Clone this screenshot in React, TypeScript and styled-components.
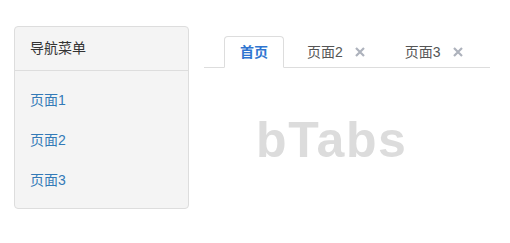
import React from "react";
import styled, { createGlobalStyle } from "styled-components";

const Global = createGlobalStyle`
  html, body { margin: 0; padding: 0; background: #fff; }
  body {
    font-family: "Liberation Sans", "Noto Sans CJK SC", sans-serif;
    font-size: 14px;
    line-height: 20px;
    color: #333;
  }
  * { box-sizing: border-box; }
`;

const Page = styled.div`
  display: flex;
  align-items: flex-start;
  gap: 15px;
  padding: 26px 0 0 14px;
`;

const Panel = styled.div`
  width: 175px;
  background: #f4f4f4;
  border: 1px solid #dddddd;
  border-radius: 4px;
`;

const PanelHeading = styled.div`
  padding: 11px 15px 12px;
  border-bottom: 1px solid #dddddd;
  color: #333;
`;

const NavList = styled.ul`
  list-style: none;
  margin: 0;
  padding: 9px 0 8px;
`;

const NavItem = styled.li`
  padding: 10px 15px;
  color: #337ab7;
  cursor: pointer;
`;

const Main = styled.div`
  width: 286px;
  padding-top: 10px;
`;

const TabBar = styled.ul`
  display: flex;
  list-style: none;
  margin: 0;
  padding: 0 0 0 20px;
  border-bottom: 1px solid #dddddd;
`;

const Tab = styled.li<{ $active?: boolean; $closable?: boolean }>`
  display: flex;
  align-items: center;
  margin: 0 2px -1px 0;
  padding: ${(p) => (p.$closable ? "5px 16px 5px 20px" : "5px 15px")};
  border: 1px solid ${(p) => (p.$active ? "#dddddd" : "transparent")};
  border-bottom-color: ${(p) => (p.$active ? "#fff" : "transparent")};
  border-radius: 4px 4px 0 0;
  background: ${(p) => (p.$active ? "#fff" : "transparent")};
  color: ${(p) => (p.$active ? "#2f75d0" : "#555")};
  font-weight: ${(p) => (p.$active ? "bold" : "normal")};
  white-space: nowrap;
`;

const Close = styled.span`
  display: inline-flex;
  margin-left: 12px;
  width: 10px;
  height: 10px;
`;

const Content = styled.div`
  padding: 42px 0 0 52px;
`;

const Title = styled.h1`
  margin: 0;
  font-family: "Liberation Sans", "DejaVu Sans", sans-serif;
  font-size: 50px;
  line-height: 60px;
  letter-spacing: 1.6px;
  font-weight: bold;
  color: #dcdcdc;
`;

const CloseIcon = () => (
  <svg width="10" height="10" viewBox="0 0 10 10">
    <path d="M1 1 L9 9 M9 1 L1 9" stroke="#adb2bc" strokeWidth="2.2" strokeLinecap="butt" />
  </svg>
);

export default function App() {
  return (
    <>
      <Global />
      <Page>
        <Panel>
          <PanelHeading>导航菜单</PanelHeading>
          <NavList>
            <NavItem>页面1</NavItem>
            <NavItem>页面2</NavItem>
            <NavItem>页面3</NavItem>
          </NavList>
        </Panel>
        <Main>
          <TabBar>
            <Tab $active>首页</Tab>
            <Tab $closable>
              页面2
              <Close>
                <CloseIcon />
              </Close>
            </Tab>
            <Tab $closable>
              页面3
              <Close>
                <CloseIcon />
              </Close>
            </Tab>
          </TabBar>
          <Content>
            <Title>bTabs</Title>
          </Content>
        </Main>
      </Page>
    </>
  );
}
